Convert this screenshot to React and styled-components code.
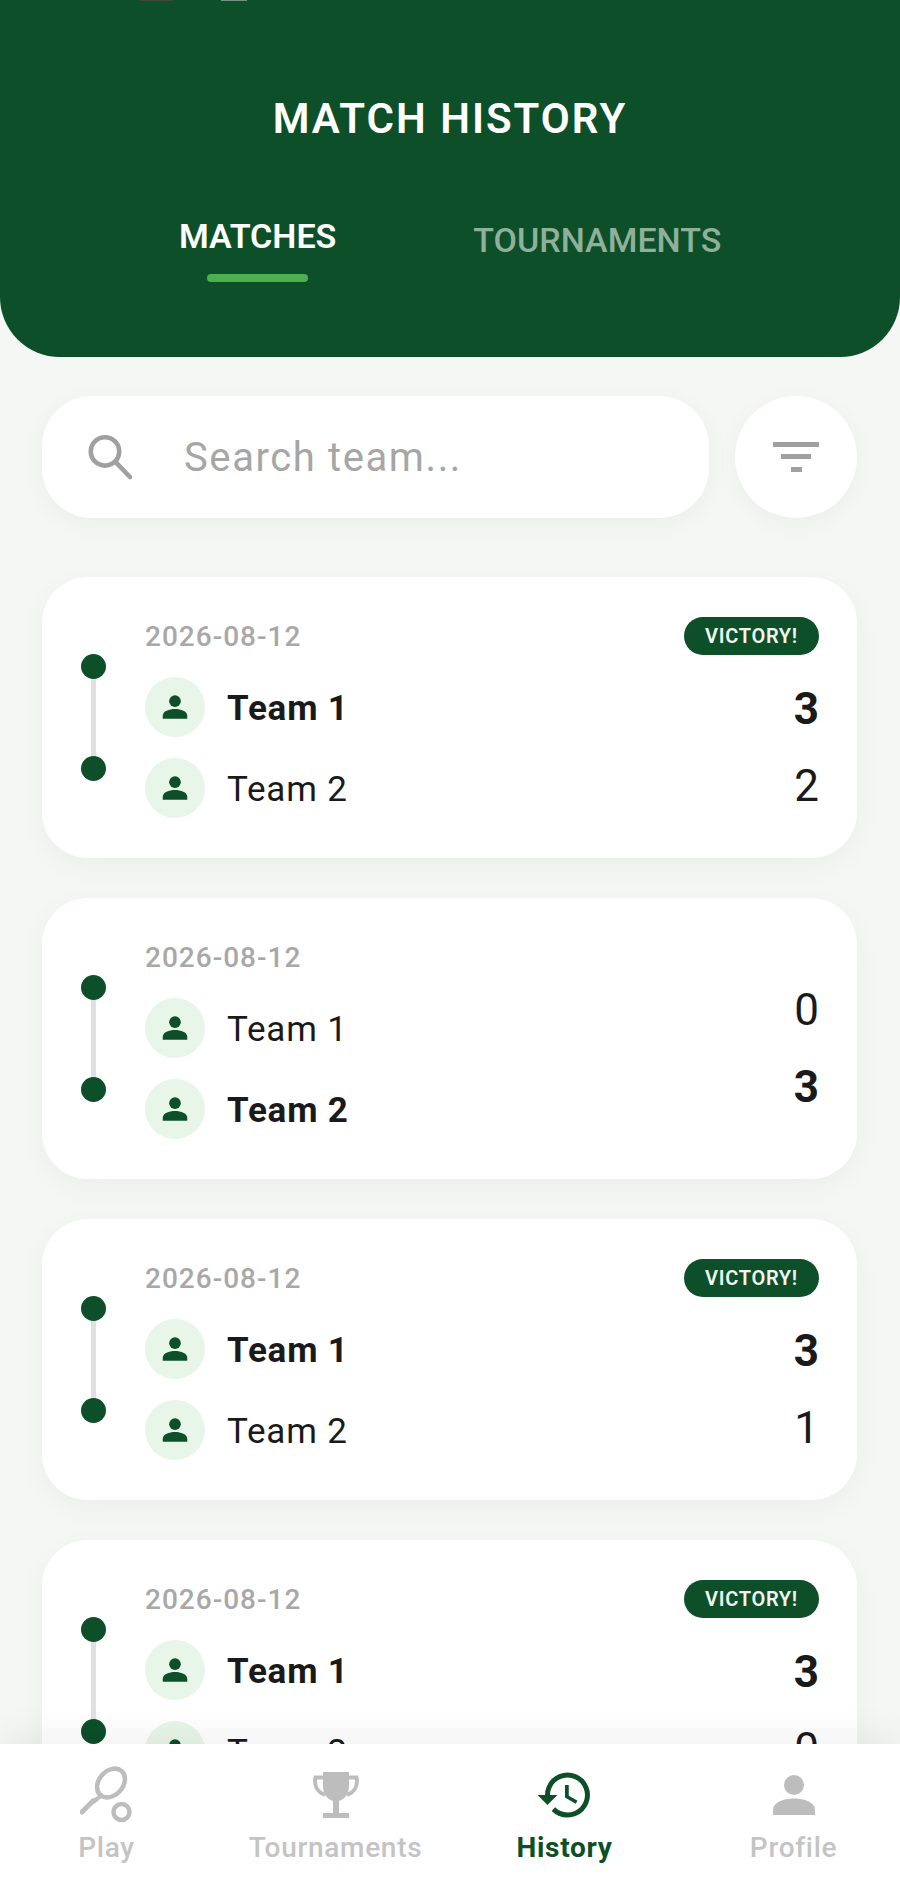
import styled, { createGlobalStyle } from "styled-components";

const GREEN = "#0c4f28";

const GlobalStyle = createGlobalStyle`
  html, body {
    margin: 0;
    padding: 0;
    background: #f5f7f5;
    font-family: Roboto, "Liberation Sans", sans-serif;
  }
`;

const Page = styled.div`
  width: 900px;
  height: 1900px;
  display: flex;
  flex-direction: column;
  overflow: hidden;
  background: #f5f7f5;
`;

const Header = styled.header`
  flex: none;
  position: relative;
  height: 357px;
  box-sizing: border-box;
  padding-top: 96px;
  background: ${GREEN};
  border-radius: 0 0 60px 60px;
  color: #fff;
`;

// what is left of the status bar, cut off by the top edge
const StatusScrap = styled.span`
  position: absolute;
  top: 0;
  left: ${(p) => p.$left}px;
  width: ${(p) => p.$width}px;
  height: 1px;
  background: ${(p) => p.$color};
`;

const Title = styled.h1`
  margin: 0;
  text-align: center;
  font-size: 42px;
  line-height: 46px;
  font-weight: 600;
  letter-spacing: 2px;
`;

const Tabs = styled.div`
  display: flex;
  margin-top: 74px;
  padding-left: 179px;
  gap: 137px;
`;

const Tab = styled.div`
  display: flex;
  flex-direction: column;
  align-items: center;
  padding-top: ${(p) => (p.$active ? "0" : "4px")};
  font-size: 34px;
  line-height: 40px;
  font-weight: ${(p) => (p.$active ? 600 : 500)};
  color: ${(p) => (p.$active ? "#fff" : "#8fb09a")};
`;

const TabBar = styled.div`
  width: 101px;
  height: 8px;
  margin-top: 18px;
  border-radius: 4px;
  background: #4caf50;
`;

const Content = styled.main`
  flex: 1;
  min-height: 0;
  overflow: hidden;
  padding: 39px 43px 0 42px;
`;

const SearchRow = styled.div`
  display: flex;
  gap: 26px;
  margin-bottom: 59px;
`;

const SearchBox = styled.div`
  width: 667px;
  height: 122px;
  box-sizing: border-box;
  padding-left: 42px;
  display: flex;
  align-items: center;
  gap: 52px;
  border-radius: 50px;
  background: #fff;
  box-shadow: 0 6px 24px rgba(0, 0, 0, 0.04);
`;

const SearchInput = styled.div`
  font-size: 40px;
  letter-spacing: 1.6px;
  color: #a6a6a6;
`;

const FilterButton = styled.div`
  width: 122px;
  height: 122px;
  display: flex;
  align-items: center;
  justify-content: center;
  border-radius: 50%;
  background: #fff;
  box-shadow: 0 6px 24px rgba(0, 0, 0, 0.04);
`;

const CardList = styled.div`
  display: flex;
  flex-direction: column;
  gap: 40px;
`;

const Card = styled.article`
  flex: none;
  height: 281px;
  box-sizing: border-box;
  padding: 40px 38px 0 39px;
  display: flex;
  border-radius: 46px;
  background: #fff;
  box-shadow: 0 8px 28px rgba(0, 0, 0, 0.04);
`;

const Timeline = styled.div`
  width: 25px;
  margin: 37px 39px 0 0;
  height: 127px;
  display: flex;
  flex-direction: column;
  align-items: center;
  justify-content: space-between;
  position: relative;

  &::before {
    content: "";
    position: absolute;
    top: 12px;
    bottom: 12px;
    left: 10px;
    width: 5px;
    background: #e0e0e0;
  }
`;

const Dot = styled.span`
  position: relative;
  width: 25px;
  height: 25px;
  border-radius: 50%;
  background: ${GREEN};
`;

const Details = styled.div`
  flex: 1;
  display: flex;
  flex-direction: column;
`;

const DateText = styled.div`
  height: 38px;
  padding-top: 1px;
  font-size: 28px;
  line-height: 38px;
  font-weight: 500;
  letter-spacing: 1px;
  color: #a8a8a8;
`;

const Teams = styled.div`
  display: flex;
  flex-direction: column;
  gap: 21px;
  margin-top: 21px;
`;

const TeamRow = styled.div`
  display: flex;
  align-items: center;
  gap: 22px;
  height: 60px;
`;

const Avatar = styled.div`
  width: 60px;
  height: 60px;
  display: flex;
  align-items: center;
  justify-content: center;
  border-radius: 50%;
  background: #e8f5e9;
  color: ${GREEN};
`;

const TeamName = styled.div`
  padding-top: 2px;
  font-size: 35px;
  letter-spacing: 0.8px;
  font-weight: ${(p) => (p.$win ? 700 : 400)};
  color: #1a1a1a;
`;

const Side = styled.div`
  display: flex;
  flex-direction: column;
  align-items: flex-end;
`;

const Badge = styled.div`
  height: 38px;
  width: 135px;
  display: flex;
  align-items: center;
  justify-content: center;
  border-radius: 19px;
  background: ${GREEN};
  color: #f0f5f1;
  font-size: 20px;
  font-weight: 600;
  letter-spacing: 0.7px;
`;

const BadgeSlot = styled.div`
  height: 18px;
`;

const Scores = styled.div`
  display: flex;
  flex-direction: column;
  align-items: flex-end;
  gap: 25px;
  margin-top: 28px;
`;

const Score = styled.div`
  font-size: 44px;
  line-height: 52px;
  font-weight: ${(p) => (p.$win ? 700 : 400)};
  color: #1a1a1a;
`;

const Nav = styled.nav`
  flex: none;
  position: relative;
  height: 156px;
  display: grid;
  grid-template-columns: repeat(4, 229px);
  justify-content: center;
  background: #fff;
  box-shadow: 0 -12px 30px rgba(0, 0, 0, 0.05);
`;

const NavItem = styled.div`
  display: flex;
  flex-direction: column;
  align-items: center;
  padding-top: 20px;
  color: ${(p) => (p.$active ? GREEN : "#bdbdbd")};
`;

const NavIcon = styled.div`
  height: 62px;
  display: flex;
  align-items: center;
  justify-content: center;
`;

const NavLabel = styled.div`
  margin-top: 5px;
  font-size: 28px;
  line-height: 34px;
  letter-spacing: 0.7px;
  font-weight: ${(p) => (p.$active ? 700 : 500)};
  color: ${(p) => (p.$active ? GREEN : "#c4c4c4")};
`;

function PersonIcon({ size = 28 }) {
  return (
    <svg width={size} height={size} viewBox="0 0 24 24" fill="currentColor">
      <circle cx="12" cy="7" r="5" />
      <path d="M1.500 22v-2.500c0-4 5.500-5.800 10.500-5.800s10.500 1.800 10.500 5.800V22z" />
    </svg>
  );
}

function SearchIcon() {
  return (
    <svg width="48" height="48" viewBox="0 0 24 24" fill="none" stroke="#a0a0a0" strokeWidth="2.300">
      <circle cx="10.500" cy="9.200" r="7.100" />
      <path d="M15.700 14.400 23 22" strokeLinecap="round" />
    </svg>
  );
}

function FilterIcon() {
  return (
    <svg width="46" height="30" viewBox="0 0 46 30" fill="#a0a0a0">
      <rect x="0" y="0" width="46" height="5" />
      <rect x="8" y="12" width="30" height="5" />
      <rect x="18" y="25" width="11" height="5" />
    </svg>
  );
}

function RacketIcon() {
  return (
    <svg width="54" height="58" viewBox="0 0 54 58" fill="none" stroke="currentColor" strokeWidth="4.500">
      <path d="M2 46 13 35" strokeWidth="5" strokeLinecap="round" />
      <path d="M11 37c6-2 9-5 10-10M11 37c4-4 8-6 12-7" strokeWidth="3.500" />
      <ellipse cx="31" cy="17" rx="12" ry="16" transform="rotate(42 31 17)" />
      <circle cx="41.500" cy="46" r="8" />
    </svg>
  );
}

function TrophyIcon() {
  return (
    <svg width="46" height="46" viewBox="0 0 46 46" fill="currentColor">
      <path d="M10 0h26v14c0 8-4 13-10 15v12h10v5H10v-5h10V29C14 27 10 22 10 14z" />
      <path d="M10 5.500H2.500C1 13 4 20 12 23M36 5.500h7.500C45 13 42 20 34 23" fill="none" stroke="currentColor" strokeWidth="4" />
    </svg>
  );
}

function HistoryIcon() {
  return (
    <svg width="60" height="60" viewBox="0 0 24 24" fill="currentColor">
      <path d="M13 3a9 9 0 0 0-9 9H1l3.890 3.890.07.14L9 12H6c0-3.870 3.130-7 7-7s7 3.130 7 7-3.130 7-7 7c-1.930 0-3.680-.79-4.940-2.060l-1.420 1.420A8.954 8.954 0 0 0 13 21a9 9 0 0 0 0-18zm-1 5v5l4.280 2.540.72-1.210-3.500-2.080V8H12z" />
    </svg>
  );
}

const matches = [
  { a: 3, b: 2 },
  { a: 0, b: 3 },
  { a: 3, b: 1 },
  { a: 3, b: 0 },
];

function Team({ name, win }) {
  return (
    <TeamRow>
      <Avatar>
        <PersonIcon />
      </Avatar>
      <TeamName $win={win}>{name}</TeamName>
    </TeamRow>
  );
}

function MatchCard({ a, b }) {
  const firstWon = a > b;
  return (
    <Card>
      <Timeline>
        <Dot />
        <Dot />
      </Timeline>
      <Details>
        <DateText>2026-08-12</DateText>
        <Teams>
          <Team name="Team 1" win={firstWon} />
          <Team name="Team 2" win={!firstWon} />
        </Teams>
      </Details>
      <Side>
        {firstWon ? <Badge>VICTORY!</Badge> : <BadgeSlot />}
        <Scores>
          <Score $win={firstWon}>{a}</Score>
          <Score $win={!firstWon}>{b}</Score>
        </Scores>
      </Side>
    </Card>
  );
}

export default function App() {
  return (
    <Page>
      <GlobalStyle />
      <Header>
        <StatusScrap $left={140} $width={33} $color="#3d4a35" />
        <StatusScrap $left={221} $width={26} $color="#6f9480" />
        <Title>MATCH HISTORY</Title>
        <Tabs>
          <Tab $active>
            MATCHES
            <TabBar />
          </Tab>
          <Tab>TOURNAMENTS</Tab>
        </Tabs>
      </Header>
      <Content>
        <SearchRow>
          <SearchBox>
            <SearchIcon />
            <SearchInput>Search team...</SearchInput>
          </SearchBox>
          <FilterButton>
            <FilterIcon />
          </FilterButton>
        </SearchRow>
        <CardList>
          {matches.map((m, i) => (
            <MatchCard key={i} a={m.a} b={m.b} />
          ))}
        </CardList>
      </Content>
      <Nav>
        <NavItem>
          <NavIcon><RacketIcon /></NavIcon>
          <NavLabel>Play</NavLabel>
        </NavItem>
        <NavItem>
          <NavIcon><TrophyIcon /></NavIcon>
          <NavLabel>Tournaments</NavLabel>
        </NavItem>
        <NavItem $active>
          <NavIcon><HistoryIcon /></NavIcon>
          <NavLabel $active>History</NavLabel>
        </NavItem>
        <NavItem>
          <NavIcon><PersonIcon size={48} /></NavIcon>
          <NavLabel>Profile</NavLabel>
        </NavItem>
      </Nav>
    </Page>
  );
}
